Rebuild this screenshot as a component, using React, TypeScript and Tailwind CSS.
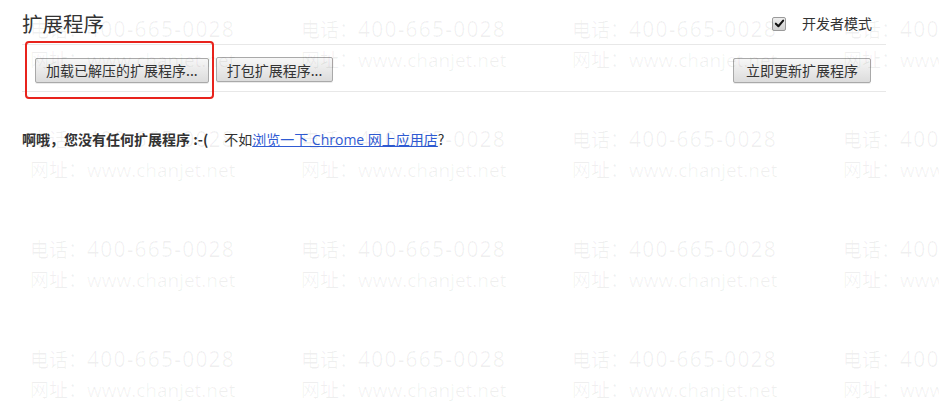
import React from 'react';

const cjk = '"Noto Sans CJK SC", "Noto Sans", sans-serif';

/*
Faint company watermark tiled over the whole page, 4 columns x 4 rows
*/
function Watermark() {
  const cells = Array.from({ length: 16 });
  return (
    <div
      className="absolute inset-0 pointer-events-none grid grid-cols-[271px_271px_271px_271px] auto-rows-[110px] pl-[30px] pt-[14px] text-[19px] leading-[30px] text-black/[0.06]"
      style={{ fontFamily: '"Open Sans", "Noto Sans CJK SC", sans-serif' }}
    >
      {cells.map((_, i) => (
        <div key={i} className="whitespace-nowrap">
          <div>
            电话：<span className="text-[21px] tracking-[1.2px]">400-665-0028</span>
          </div>
          <div>网址：www.chanjet.net</div>
        </div>
      ))}
    </div>
  );
}

function GrayButton({ text, wide = false }: { text: string; wide?: boolean }) {
  return (
    <button
      className={
        'h-[25px] rounded-[2px] border border-[#a9a9a9] bg-gradient-to-b from-[#f7f7f7] to-[#dcdcdc] text-[14px] leading-none text-[#333] shadow-[0_1px_0_rgba(0,0,0,0.08)] ' +
        (wide ? 'px-[12px]' : 'px-[10px]')
      }
    >
      {text}
    </button>
  );
}

export default function App() {
  return (
    <div className="relative w-[939px] h-[420px] overflow-hidden bg-white" style={{ fontFamily: cjk }}>
      <div className="w-[886px] pl-[22px]">
        {/* header */}
        <div className="flex items-end justify-between pt-[9px] pb-[7px] border-b border-[#e8e8e8]">
          <h1 className="text-[20.5px] leading-[28px] text-[#333]">扩展程序</h1>
          <label className="flex items-center mr-[14px] mb-[3px] text-[14px] text-[#333]">
            <span className="w-[14px] h-[14px] flex items-center justify-center rounded-[2px] border border-[#9a9a9a] bg-gradient-to-b from-[#eee] to-[#cfcfcf]">
              <svg viewBox="0 0 12 12" className="w-[11px] h-[11px]">
                <path d="M2 6.2 L4.8 9 L10 2.8" fill="none" stroke="#111" strokeWidth="2.2" strokeLinecap="round" strokeLinejoin="round" />
              </svg>
            </span>
            <span className="ml-[16px]">开发者模式</span>
          </label>
        </div>

        {/* toolbar */}
        <div className="flex items-center justify-between pt-[12px] pb-[8px] border-b border-[#e8e8e8]">
          <div className="flex items-center gap-[7px] ml-[13px]">
            <div className="relative">
              <GrayButton text="加载已解压的扩展程序..." />
              <div className="absolute left-[-10px] right-[-5px] top-[-16px] bottom-[-16px] border-[2.5px] border-[#e8231c] rounded-[4px]" />
            </div>
            <GrayButton text="打包扩展程序..." />
          </div>
          <div className="mr-[15px]">
            <GrayButton text="立即更新扩展程序" wide />
          </div>
        </div>
      </div>

      {/* empty state */}
      <p className="mt-[37px] pl-[22px] text-[14px] text-[#333] whitespace-nowrap">
        <span className="font-bold">啊哦，您没有任何扩展程序 :-(</span>
        <span className="ml-[16px]">不如</span>
        <a
          href="#"
          className="text-[#2f5bd3] underline"
          style={{ fontFamily: '"Open Sans", "Noto Sans CJK SC", sans-serif' }}
        >
          浏览一下 Chrome 网上应用店
        </a>
        <span>?</span>
      </p>

      <Watermark />
    </div>
  );
}
